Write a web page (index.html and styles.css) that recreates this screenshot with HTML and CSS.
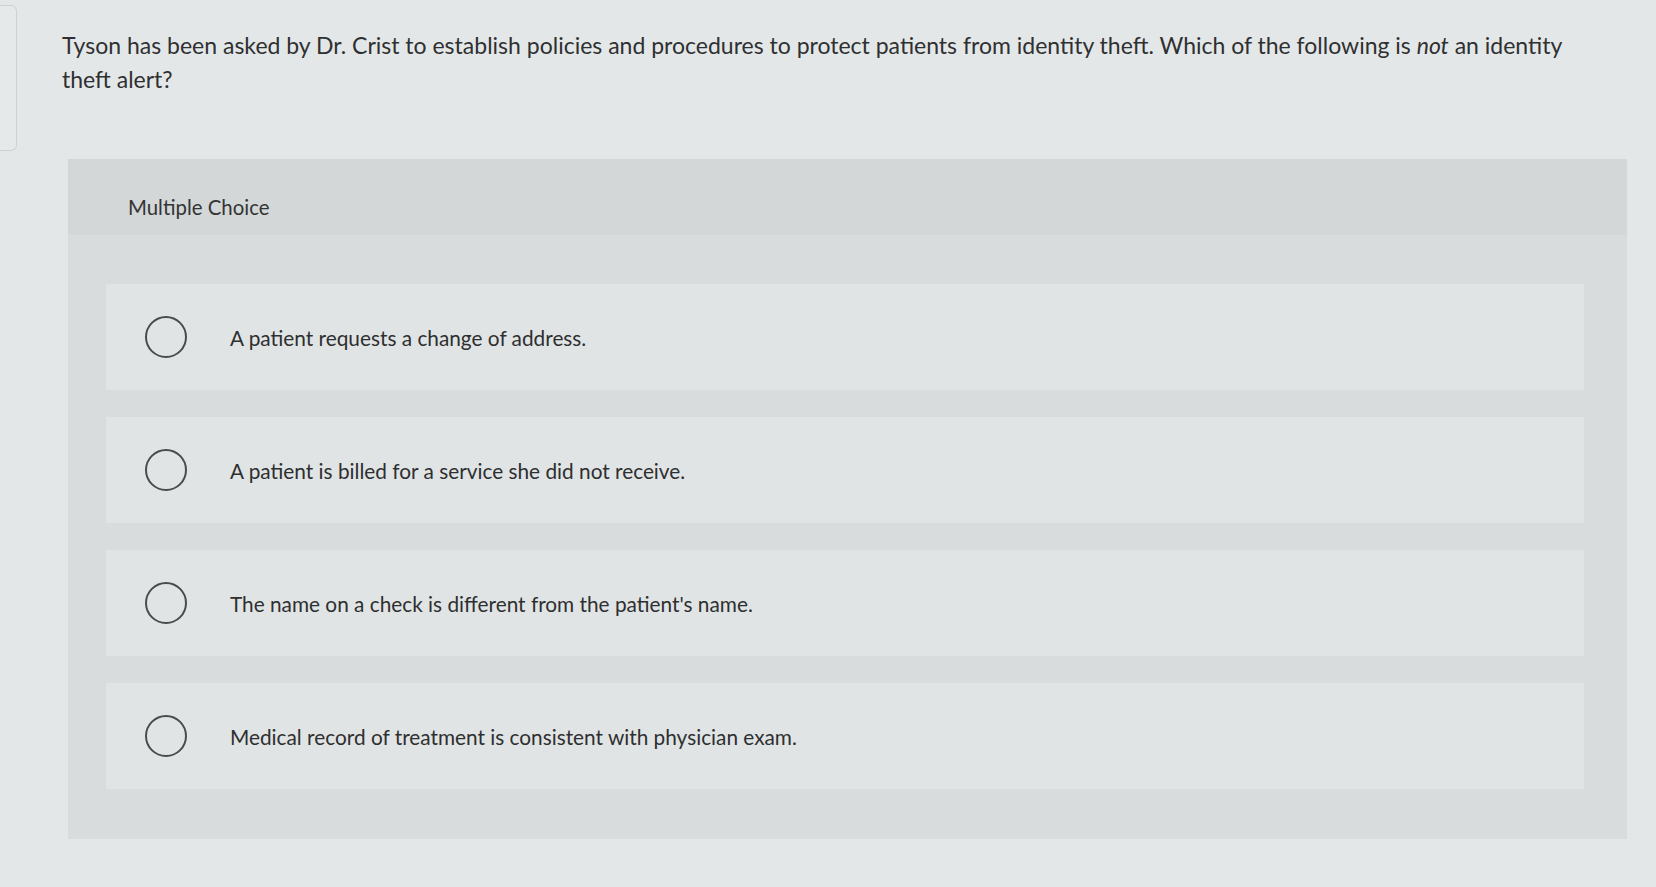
FILE: index.html
```html
<!DOCTYPE html>
<html lang="en">
<head>
<meta charset="utf-8">
<title>Multiple Choice</title>
<link rel="stylesheet" href="styles.css">
</head>
<body>
<div class="page">
  <div class="edge-tab"></div>
  <main class="content">
    <p class="question">Tyson has been asked by Dr. Crist to establish policies and procedures to protect patients from identity theft. Which of the following is <em>not</em> an identity <span class="question-end">theft alert?</span></p>
    <section class="panel">
      <div class="panel-header">Multiple Choice</div>
      <div class="options">
        <label class="option"><span class="radio"></span><span class="option-text">A patient requests a change of address.</span></label>
        <label class="option"><span class="radio"></span><span class="option-text">A patient is billed for a service she did not receive.</span></label>
        <label class="option"><span class="radio"></span><span class="option-text">The name on a check is different from the patient's name.</span></label>
        <label class="option"><span class="radio"></span><span class="option-text">Medical record of treatment is consistent with physician exam.</span></label>
      </div>
    </section>
  </main>
</div>
</body>
</html>
```

FILE: styles.css
```css
* { box-sizing: border-box; }
html, body {
  margin: 0;
  padding: 0;
  height: 100%;
}
body {
  background: #e4e7e8;
  font-family: Lato, "Open Sans", sans-serif;
  color: #2e2f30;
  overflow: hidden;
}
.page {
  display: flex;
  align-items: flex-start;
  height: 887px;
}
.edge-tab {
  flex: 0 0 17px;
  height: 146px;
  margin-top: 5px;
  border: 1px solid #cfd2d3;
  border-left: none;
  border-radius: 0 6px 6px 0;
  background: #e6e9ea;
}
.content {
  flex: 1;
  padding: 0 29px 0 45px;
}
.question {
  margin: 28px 0 0 0;
  font-size: 23px;
  line-height: 34px;
  padding-right: 24px;
  color: #2f3031;
}
.question em { font-style: italic; }
.question-end { white-space: nowrap; }
.panel {
  margin: 63px 0 0 6px;
  background: #d9dcdd;
  padding-bottom: 50px;
}
.panel-header {
  height: 76px;
  padding: 36px 0 0 60px;
  font-size: 20.4px;
  line-height: 24px;
  background: #d4d7d8;
  color: #333435;
}
.options {
  display: flex;
  flex-direction: column;
  gap: 27px;
  padding: 49px 43px 0 38px;
}
.option {
  display: flex;
  align-items: center;
  height: 106px;
  padding-left: 39px;
  background: #e1e4e5;
}
.radio {
  flex: 0 0 42px;
  width: 42px;
  height: 42px;
  border: 2px solid #4a4b4c;
  border-radius: 50%;
  background: transparent;
}
.option-text {
  margin-left: 43px;
  font-size: 20.8px;
  color: #2e2f30;
}
```
